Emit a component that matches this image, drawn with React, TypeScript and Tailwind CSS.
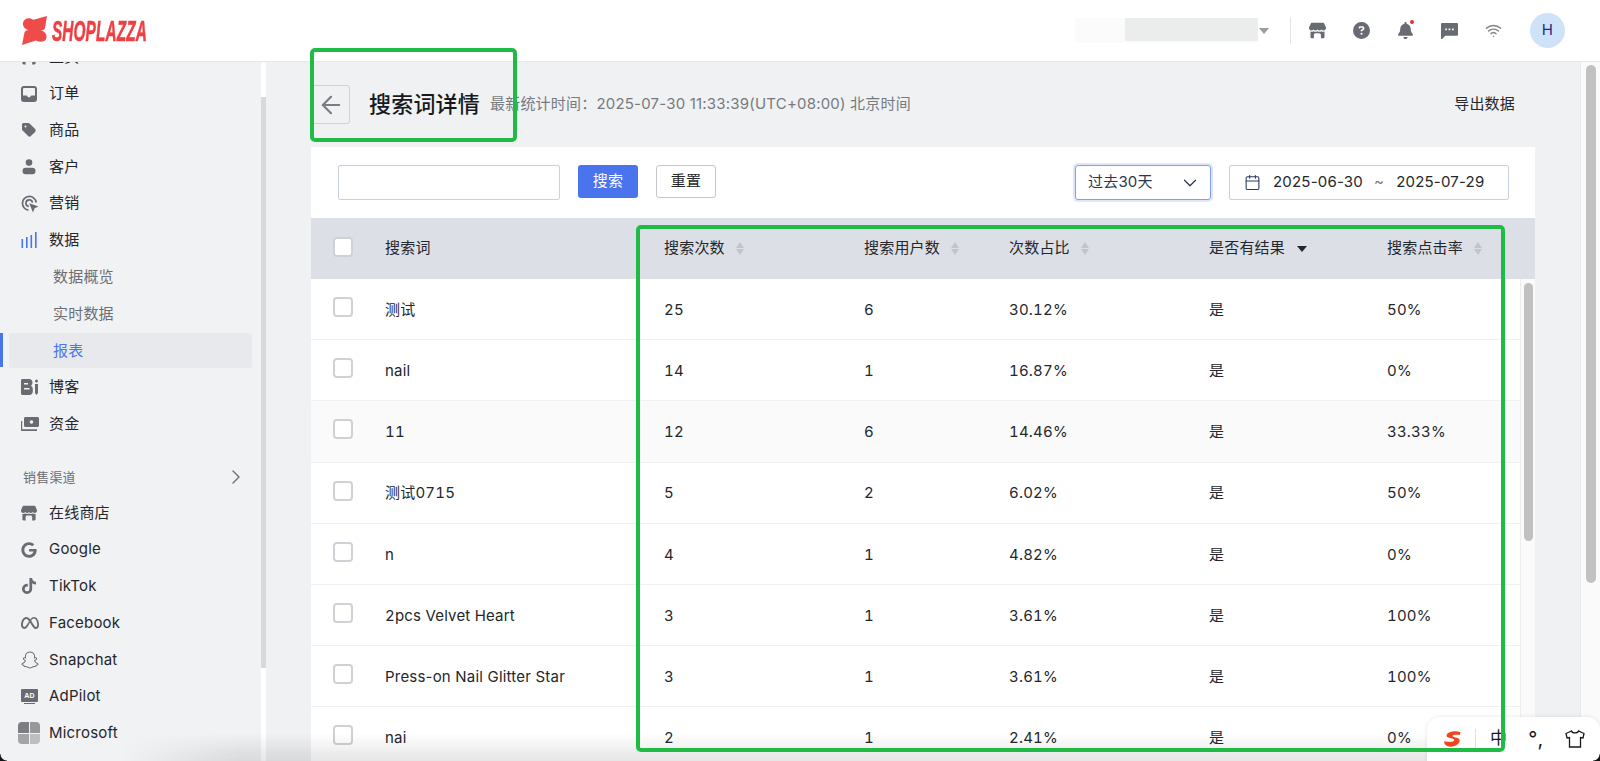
import type { ReactNode } from 'react';
import { FaGoogle, FaMeta, FaSnapchat, FaTiktok, FaBell, FaCircleQuestion, FaTag } from 'react-icons/fa6';
import { ChevronDown, ChevronRight, Wifi, ArrowLeft, Calendar } from 'lucide-react';

const font = 'font-["Inter","Noto_Sans_CJK_SC",sans-serif]';
const tableCols = 'grid-cols-[74px_279px_200px_145px_200px_178px_1fr]';

const rows = [
  { word: '测试', count: '25', users: '6', share: '30.12%', rate: '50%' },
  { word: 'nail', count: '14', users: '1', share: '16.87%', rate: '0%' },
  { word: '11', count: '12', users: '6', share: '14.46%', rate: '33.33%', hover: true },
  { word: '测试0715', count: '5', users: '2', share: '6.02%', rate: '50%' },
  { word: 'n', count: '4', users: '1', share: '4.82%', rate: '0%' },
  { word: '2pcs Velvet Heart', count: '3', users: '1', share: '3.61%', rate: '100%' },
  { word: 'Press-on Nail Glitter Star', count: '3', users: '1', share: '3.61%', rate: '100%' },
  { word: 'nai', count: '2', users: '1', share: '2.41%', rate: '0%' },
];

const StoreIcon = ({ className = '' }: { className?: string }) => (
  <svg viewBox="0 0 16 16" className={className} fill="currentColor">
    <path d="M2.6 0.8h10.8c.4 0 .7.2.9.5L16 5.2c.2 1.5-.9 2.7-2.3 2.7-.8 0-1.4-.3-1.9-.9-.5.6-1.1.9-1.9.9s-1.4-.3-1.9-.9c-.5.6-1.1.9-1.9.9S4.7 7.6 4.2 7c-.5.6-1.1.9-1.9.9C.9 7.9-.2 6.7 0 5.2L1.7 1.3c.2-.3.5-.5.9-.5z" />
    <path d="M1.4 9c.3.1.6.1.9.1.7 0 1.3-.2 1.9-.5.6.3 1.2.5 1.9.5s1.3-.2 1.9-.5c.6.3 1.2.5 1.9.5s1.3-.2 1.9-.5c.6.3 1.2.5 1.9.5.3 0 .6 0 .9-.1v5.2c0 .7-.5 1.2-1.2 1.2h-2.2v-3.2c0-1-.7-1.7-1.7-1.7H6.3c-1 0-1.7.7-1.7 1.7v3.2H2.6c-.7 0-1.2-.5-1.2-1.2z" />
  </svg>
);

const InboxIcon = () => (
  <svg viewBox="0 0 16 16" className="w-4 h-4" fill="currentColor">
    <path fillRule="evenodd" d="M3 0h10a3 3 0 0 1 3 3v10a3 3 0 0 1-3 3H3a3 3 0 0 1-3-3V3a3 3 0 0 1 3-3zm0 2a1 1 0 0 0-1 1v6.5h3.5c.4 0 .7.3.8.6.2.8.9 1.4 1.7 1.4s1.5-.6 1.700-1.400c.1-.3.4-.6.8-.6H14V3a1 1 0 0 0-1-1z" />
  </svg>
);

const PersonIcon = () => (
  <svg viewBox="0 0 16 16" className="w-4 h-4" fill="currentColor">
    <circle cx="8" cy="3.6" r="3.3" />
    <rect x="1.5" y="8.8" width="13" height="6.4" rx="3.2" />
  </svg>
);

const MarketingIcon = () => (
  <svg viewBox="0 0 18 18" className="w-[18px] h-[18px]" fill="none" stroke="currentColor" strokeWidth="1.7">
    <path d="M7.5 15.2A6.9 6.9 0 1 1 15.2 7.5" />
    <path d="M7.8 11.4A3.3 3.3 0 1 1 11.5 7.7" />
    <path d="M8.2 8.2 17.5 11.5 13.6 13.3 12 17.5z" fill="currentColor" stroke="none" />
  </svg>
);

const BarsIcon = () => (
  <svg viewBox="0 0 16 16" className="w-4 h-4 text-[#4a73ee]" fill="currentColor">
    <rect x="0.5" y="7" width="1.6" height="9" />
    <rect x="5" y="5" width="1.6" height="11" />
    <rect x="9.5" y="3" width="1.6" height="13" />
    <rect x="14" y="0" width="1.6" height="16" />
  </svg>
);

const BlogIcon = () => (
  <svg viewBox="0 0 18 16" className="w-[18px] h-4" fill="currentColor">
    <path fillRule="evenodd" d="M1.5 0H8c2.2 0 3.5 1.5 3.5 3.5 0 1.5-.7 2.5-1.7 3.3 1.2.7 2 1.8 2 3.4v2.3c0 2-1.5 3.5-3.5 3.5H1.5C.7 16 0 15.3 0 14.5V1.5C0 .7.7 0 1.5 0zM3 4v1.5h4V4zm0 5v1.5h5.5V9z" />
    <rect x="14" y="0.5" width="3" height="3" rx="1.5" />
    <path d="M14 5h3v9l-1.5 2-1.5-2z" />
  </svg>
);

const FundsIcon = () => (
  <svg viewBox="0 0 18 14" className="w-[18px] h-[14px]" fill="currentColor">
    <path fillRule="evenodd" d="M4.5 0h12c.8 0 1.5.7 1.5 1.5v7c0 .8-.7 1.5-1.5 1.5h-12C3.700 10 3 9.300 3 8.500v-7C3 .7 3.700 0 4.500 0zm6 3.200a1.800 1.800 0 1 0 0 3.600 1.800 1.800 0 0 0 0-3.600z" />
    <path d="M0 4h1.200v8.300H16V14H1c-.6 0-1-.4-1-1z" />
  </svg>
);

const AdIcon = () => (
  <span className="flex flex-col items-center w-[17px]">
    <span className="flex items-center justify-center w-[17px] h-[13px] rounded-[1px] bg-current">
      <span className="text-[7px] leading-none font-bold text-white font-['Liberation_Sans',sans-serif]">AD</span>
    </span>
    <span className="w-[11px] h-[1px] mt-[1.5px] bg-current" />
  </span>
);

const MicrosoftIcon = () => (
  <span className="grid grid-cols-2 gap-[1px] w-[22px] h-[22px] rounded-[4px] overflow-hidden -ml-[3px]">
    <span className="bg-[#7b7d82]" />
    <span className="bg-[#96989c]" />
    <span className="bg-[#a3a5a8]" />
    <span className="bg-[#bcbec1]" />
  </span>
);

const NavItem = ({ icon, label }: { icon: ReactNode; label: string }) => (
  <div className="flex items-center h-[36.7px] pl-[21px] text-[15px] text-[#24272c]">
    <span className="flex items-center w-[28px] h-[22px] text-[#686b71]">{icon}</span>
    <span>{label}</span>
  </div>
);

const SubItem = ({ label, active = false }: { label: string; active?: boolean }) => (
  <div className="relative flex items-center h-[36.7px]">
    {active && <span className="absolute left-0 top-[1px] w-[3px] h-[34px] bg-[#4a73ee]" />}
    <div className={`flex items-center ml-[9px] w-[243px] h-[35px] pl-[44px] pt-[1px] rounded-[3px] text-[15px] ${active ? 'bg-[#e8e9ec] text-[#4a73ee]' : 'text-[#6b6e74]'}`}>
      {label}
    </div>
  </div>
);

const Sidebar = () => (
  <aside className="flex w-[266px] shrink-0 bg-[#f1f2f4]">
    <div className="w-[261px] overflow-hidden">
      <div className="-mt-[23.4px]">
        <NavItem icon={<StoreIcon className="w-4 h-4" />} label="主页" />
        <NavItem icon={<InboxIcon />} label="订单" />
        <NavItem icon={<FaTag className="w-4 h-4" />} label="商品" />
        <NavItem icon={<PersonIcon />} label="客户" />
        <NavItem icon={<MarketingIcon />} label="营销" />
        <NavItem icon={<BarsIcon />} label="数据" />
        <SubItem label="数据概览" />
        <SubItem label="实时数据" />
        <SubItem label="报表" active />
        <NavItem icon={<BlogIcon />} label="博客" />
        <NavItem icon={<FundsIcon />} label="资金" />
        <div className="flex items-center justify-between h-[52.5px] pt-[18px] pl-[23px] pr-[13px] text-[13px] text-[#6b6e74]">
          <span>销售渠道</span>
          <ChevronRight className="w-6 h-6" strokeWidth={1.4} />
        </div>
        <NavItem icon={<StoreIcon className="w-4 h-4" />} label="在线商店" />
        <NavItem icon={<FaGoogle className="w-4 h-4" />} label="Google" />
        <NavItem icon={<FaTiktok className="w-4 h-4" />} label="TikTok" />
        <NavItem icon={<FaMeta className="w-[18px] h-[18px]" />} label="Facebook" />
        <NavItem icon={<FaSnapchat className="w-[18px] h-[18px]" />} label="Snapchat" />
        <NavItem icon={<AdIcon />} label="AdPilot" />
        <NavItem icon={<MicrosoftIcon />} label="Microsoft" />
      </div>
    </div>
    <div className="flex flex-col w-[5px]">
      <div className="h-[35px] bg-white rounded-t-[3px]" />
      <div className="h-[571px] bg-[#d9d9da]" />
      <div className="flex-1 bg-white" />
    </div>
  </aside>
);

const Header = () => (
  <header className="flex items-center h-[62px] shrink-0 bg-white border-b border-[#e6e7e9]">
    <div className="flex items-center pl-[22px]">
      <svg viewBox="0 0 25 29" className="w-[25px] h-[29px] text-[#ef4b4b]" fill="currentColor">
        <path d="M25 0 23 12C22.5 14 20.5 14.5 18.5 14.2 22.5 15.2 25 18 24.5 21.5 23.8 26 18.5 27 14 24.5L0 29 2.5 16.5C3 14.5 5 14 6.8 14.3 2.5 13.2 .5 10 1 6.8 1.8 2 7.5 .8 11.5 3.8z" />
      </svg>
      <div className="w-[93px] h-[24px] ml-[5px]">
        <span className="block origin-left scale-x-[0.53] whitespace-nowrap text-[29px] leading-[24px] font-bold italic text-[#ef3f42] [-webkit-text-stroke:0.6px_#ef3f42] font-['Liberation_Sans',sans-serif]">
          SHOPLAZZA
        </span>
      </div>
    </div>
    <div className="flex items-center ml-auto pr-[35px] text-[#686b71]">
      <div className="flex items-center">
        <div className="flex w-[183px] h-[25px] bg-[#fbfbfb]">
          <div className="ml-[50px] w-[133px] h-[23px] bg-[#ebecec]" />
        </div>
        <span className="ml-[1px] w-0 h-0 border-x-[5px] border-x-transparent border-t-[6px] border-t-[#9a9da2]" />
      </div>
      <span className="w-[1px] h-[27px] ml-[21px] bg-[#e3e4e6]" />
      <div className="flex items-center gap-[27px] ml-[18px]">
        <StoreIcon className="w-[17px] h-[17px]" />
        <FaCircleQuestion className="w-[17px] h-[17px]" />
        <span className="relative">
          <FaBell className="w-[17px] h-[17px]" />
          <span className="absolute -top-[2px] right-0 w-[4px] h-[4px] rounded-full bg-[#ee2b2b]" />
        </span>
        <svg viewBox="0 0 16 16" className="w-[17px] h-[17px]" fill="currentColor">
          <path fillRule="evenodd" d="M1 1h14a1 1 0 0 1 1 1v10a1 1 0 0 1-1 1H4l-3 3H0V2a1 1 0 0 1 1-1zm3 5.2v1.6h1.600V6.200zm3.200 0v1.600h1.600V6.200zm3.200 0v1.600H12V6.200z" />
        </svg>
        <Wifi className="w-[17px] h-[17px] text-[#808388]" strokeWidth={2} />
      </div>
      <div className="flex items-center justify-center w-[35px] h-[35px] ml-[28px] rounded-full bg-[#cfe3f8] text-[15px] text-[#1a2a8c]">H</div>
    </div>
  </header>
);

const SortIcon = () => (
  <span className="flex flex-col gap-[1px] ml-[11px]">
    <span className="w-0 h-0 border-x-[4.5px] border-x-transparent border-b-[6px] border-b-[#c2c4ca]" />
    <span className="w-0 h-0 border-x-[4.5px] border-x-transparent border-t-[6px] border-t-[#c2c4ca]" />
  </span>
);

const Checkbox = () => (
  <span className="block w-[20px] h-[20px] mb-[4px] ml-[22px] rounded-[4px] bg-white border-2 border-[#cfd1d6]" />
);

const HeadCell = ({ label, sort = true }: { label: string; sort?: boolean }) => (
  <div className="flex items-center">
    <span>{label}</span>
    {sort ? <SortIcon /> : <span className="ml-[12px] w-0 h-0 border-x-[5px] border-x-transparent border-t-[6px] border-t-[#24272c]" />}
  </div>
);

const Cell = ({ children }: { children: ReactNode }) => <span className="pt-[2px] tabular-nums">{children}</span>;

const Table = () => (
  <div className="text-[15px] text-[#24272c]">
    <div className={`grid ${tableCols} items-center h-[61px] bg-[#dcdfe6]`}>
      <Checkbox />
      <span>搜索词</span>
      <HeadCell label="搜索次数" />
      <HeadCell label="搜索用户数" />
      <HeadCell label="次数占比" />
      <HeadCell label="是否有结果" sort={false} />
      <HeadCell label="搜索点击率" />
    </div>
    <div className="flex">
      <div className="w-[1209px]">
        {rows.map((r) => (
          <div
            key={r.word}
            className={`grid ${tableCols} items-center h-[61.2px] border-b border-[#eff0f2] ${r.hover ? 'bg-[#fafafa]' : 'bg-white'}`}
          >
            <Checkbox />
            {/\d/.test(r.word) ? <Cell>{r.word}</Cell> : <span className="pt-[2px]">{r.word}</span>}
            <Cell>{r.count}</Cell>
            <Cell>{r.users}</Cell>
            <Cell>{r.share}</Cell>
            <Cell>是</Cell>
            <Cell>{r.rate}</Cell>
          </div>
        ))}
      </div>
      <div className="flex-1 flex justify-center pt-[4px] bg-[#fafafa] border-l border-[#eceded]">
        <span className="block w-[9px] h-[258px] rounded-full bg-[#c1c1c1]" />
      </div>
    </div>
  </div>
);

const App = () => (
  <div className={`relative flex flex-col w-[1600px] h-[761px] overflow-hidden bg-[#f0f1f3] tracking-[0.2px] ${font}`}>
    <Header />
    <div className="flex flex-1 min-h-0">
      <Sidebar />
      <main className="flex-1 min-w-0 px-[45px] pt-[23px] overflow-hidden">
        <div className="flex items-center h-[39px] mb-[23px]">
          <button className="flex items-center justify-center w-[39px] h-[39px] rounded-[3px] border border-[#cfd1d6] text-[#7a7d83]">
            <ArrowLeft className="w-[28px] h-[28px]" strokeWidth={1.9} />
          </button>
          <h1 className="ml-[19px] text-[22px] font-medium text-[#17191d]">搜索词详情</h1>
          <span className="ml-[10px] text-[15px] text-[#777a80]">最新统计时间：2025-07-30 11:33:39(UTC+08:00) 北京时间</span>
          <span className="ml-auto mr-[20px] text-[15px] text-[#24272c]">导出数据</span>
        </div>
        <section className="bg-white">
          <div className="flex h-[71px] pt-[18px] pl-[27px] pr-[26px] text-[15px]">
            <input className="w-[222px] h-[35px] border border-[#c9d0de] rounded-[2px] bg-white" />
            <button className="w-[60px] h-[33px] ml-[18px] rounded-[3px] bg-[#4a73ee] text-white">搜索</button>
            <button className="w-[60px] h-[33px] ml-[18px] rounded-[3px] border border-[#c4c6cb] text-[#24272c]">重置</button>
            <div className="flex items-center justify-between w-[136px] h-[35px] ml-auto pl-[12px] pr-[9px] rounded-[3px] border border-[#7e9df3] shadow-[0_0_0_2px_#dfe7fc] text-[#2c3550]">
              <span>过去30天</span>
              <ChevronDown className="w-[22px] h-[22px]" strokeWidth={1.3} />
            </div>
            <div className="flex items-center w-[280px] h-[35px] ml-[18px] pl-[14px] rounded-[2px] border border-[#c9d0de] text-[#24272c]">
              <Calendar className="w-[17px] h-[17px] text-[#2c3a60]" strokeWidth={1.5} />
              <span className="ml-[12px]">2025-06-30</span>
              <span className="ml-[11px] text-[#777a80]">~</span>
              <span className="ml-[12px]">2025-07-29</span>
            </div>
          </div>
          <Table />
        </section>
      </main>
      <div className="flex justify-center w-[20px] shrink-0 bg-[#fafafa] border-l border-[#e8e9ea]">
        <span className="block w-[10px] h-[518px] mt-[3px] rounded-full bg-[#c1c1c1]" />
      </div>
    </div>

    <div className="absolute left-[120px] right-0 bottom-0 h-[28px] bg-gradient-to-t from-black/10 to-transparent [mask-image:linear-gradient(to_right,transparent,black_120px)] pointer-events-none" />

    <div className="absolute right-0 bottom-0 flex items-center w-[173px] h-[44px] pl-[15px] bg-white rounded-t-[13px] shadow-[0_0_4px_rgba(0,0,0,0.1)] text-[#17191d]">
      <svg viewBox="0 0 22 20" className="w-[21px] h-[18px]">
        <path d="M20 2.5C15 .5 6 1.5 4.5 5.5 3 9.5 13 8.5 13 11 13 13.5 6 13.5 1.5 12.5 2 16 4 18.5 9 18.5 15 18.5 19 15 19 11.5 19 8 10.5 8.5 11 6.5 11.5 5 16 5 19 5.5z" fill="#f4431c" />
      </svg>
      <span className="w-[1px] h-[20px] ml-[12px] bg-[#dfe0e2]" />
      <span className="ml-[14px] text-[17px]">中</span>
      <span className="ml-[21px] w-[20px] text-[20px] leading-none tracking-[3px]">°,</span>
      <svg viewBox="0 0 20 18" className="ml-[17px] w-[20px] h-[18px]" fill="none" stroke="currentColor" strokeWidth="1.3">
        <path d="M6.5 1 1 3.5 2 8l2.5-.5V17h11V7.5L18 8l1-4.5L13.500 1C13 3.500 7 3.500 6.500 1z" />
      </svg>
    </div>

    <div className="absolute left-0 bottom-0 w-[7px] h-[7px] bg-[radial-gradient(circle_at_top_right,transparent_6px,#141414_7px)]" />
    <div className="absolute right-0 bottom-0 w-[7px] h-[7px] bg-[radial-gradient(circle_at_top_left,transparent_6px,#141414_7px)]" />

    <div className="absolute left-[310px] top-[48px] w-[207px] h-[94px] rounded-[5px] border-[4px] border-[#1fbb45] pointer-events-none" />
    <div className="absolute left-[636px] top-[225px] w-[869px] h-[527px] rounded-[5px] border-[4px] border-[#1fbb45] pointer-events-none" />
  </div>
);

export default App;
